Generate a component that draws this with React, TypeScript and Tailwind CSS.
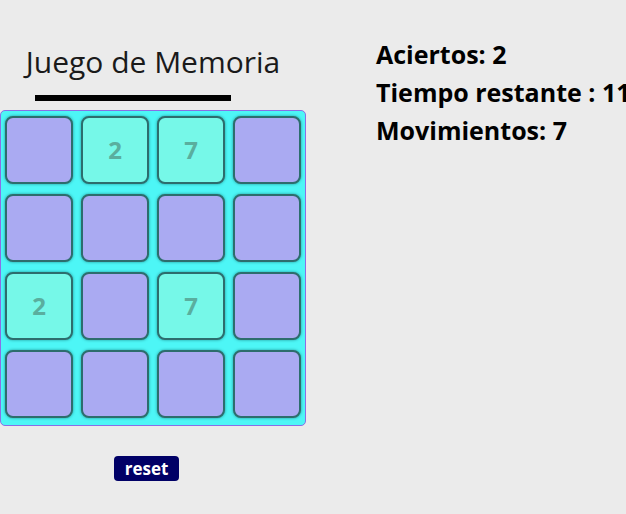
import React from 'react';

type Card = { value: number; shown: boolean };

const cards: Card[] = [
  { value: 0, shown: false },
  { value: 2, shown: true },
  { value: 7, shown: true },
  { value: 0, shown: false },
  { value: 0, shown: false },
  { value: 0, shown: false },
  { value: 0, shown: false },
  { value: 0, shown: false },
  { value: 2, shown: true },
  { value: 0, shown: false },
  { value: 7, shown: true },
  { value: 0, shown: false },
  { value: 0, shown: false },
  { value: 0, shown: false },
  { value: 0, shown: false },
  { value: 0, shown: false },
];

export default function App() {
  return (
    <div className="min-h-[514px] w-full bg-[#ebebeb] font-['Open_Sans',sans-serif] text-black overflow-hidden">
      <div className="flex items-start">
        <div className="w-[306px] shrink-0 flex flex-col">
          <h1 className="mt-[43px] text-center text-[30px] leading-[38px] font-normal text-[#1a1a1a]">Juego de Memoria</h1>
          <div className="mt-[14px] ml-[35px] w-[196px] h-[6px] bg-black" />
          <div className="mt-[9px] grid grid-cols-4 gap-x-2 gap-y-[10px] px-[4px] pt-[5px] pb-[7px] bg-[#4df6f6] border border-[#8a6ee6] rounded-[5px]">
            {cards.map((c, i) => (
              <div
                key={i}
                className={`h-[68px] rounded-[8px] border-2 border-[#2d6d6d] shadow-[0_0_3px_rgba(0,80,80,0.6)] flex items-center justify-center text-[24px] font-bold text-[#5aae9e] ${c.shown ? 'bg-[#76f8e8]' : 'bg-[#aaaaf2]'}`}
              >
                {c.shown ? c.value : ''}
              </div>
            ))}
          </div>
          <div className="mt-[30px] ml-[114px]">
            <button className="w-[65px] h-[25px] rounded-[4px] bg-[#000066] text-white text-[17px] font-bold leading-none">reset</button>
          </div>
        </div>
        <div className="ml-[70px] mt-[35px] flex flex-col text-[25px] font-bold leading-[38px] whitespace-nowrap">
          <span>Aciertos: 2</span>
          <span>Tiempo restante : 11</span>
          <span>Movimientos: 7</span>
        </div>
      </div>
    </div>
  );
}
